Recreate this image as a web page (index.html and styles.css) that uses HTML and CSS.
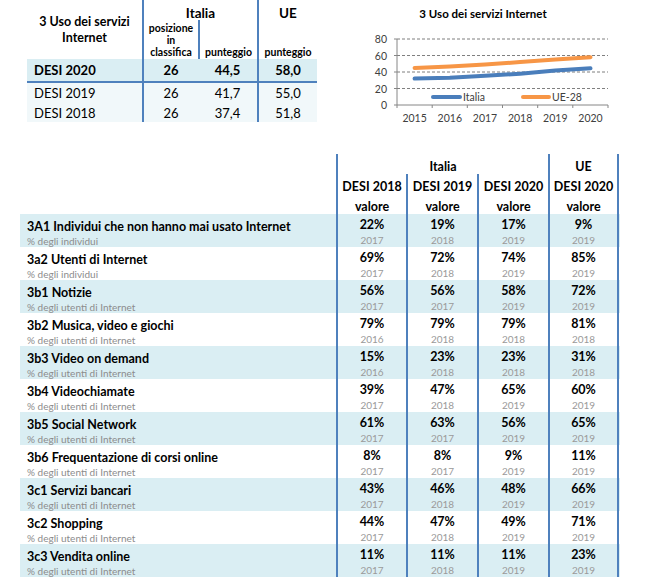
FILE: index.html
```html
<!DOCTYPE html>
<html lang="it">
<head>
<meta charset="utf-8">
<title>3 Uso dei servizi Internet</title>
<link rel="stylesheet" href="styles.css">
</head>
<body>
<div class="page">
  <section class="top">
    <div class="summary">
      <div class="s-title">3 Uso dei servizi<br>Internet</div>
      <div class="s-group bl">Italia</div>
      <div class="s-group s-ue bl">UE</div>
      <div class="s-sub bl">posizione<br>in<br>classifica</div>
      <div class="s-sub bl">punteggio</div>
      <div class="s-sub bl">punteggio</div>

      <div class="s-lab hl strong">DESI 2020</div>
      <div class="s-val hl strong bl">26</div>
      <div class="s-val hl strong">44,5</div>
      <div class="s-val hl strong bl">58,0</div>

      <div class="s-lab lt sep">DESI 2019</div>
      <div class="s-val lt sep bl">26</div>
      <div class="s-val lt sep">41,7</div>
      <div class="s-val lt sep bl">55,0</div>

      <div class="s-lab lt">DESI 2018</div>
      <div class="s-val lt bl">26</div>
      <div class="s-val lt">37,4</div>
      <div class="s-val lt bl">51,8</div>
    </div>

    <div class="chart">
      <svg class="chart-svg" width="310" height="130" viewBox="0 0 310 130">
        <text class="c-title" x="143" y="18" text-anchor="middle">3 Uso dei servizi Internet</text>
        <g class="grid">
          <line x1="57" y1="39" x2="268" y2="39"/>
          <line x1="57" y1="55.5" x2="268" y2="55.5"/>
          <line x1="57" y1="72" x2="268" y2="72"/>
          <line x1="57" y1="88.5" x2="268" y2="88.5"/>
        </g>
        <g class="axis">
          <line x1="57" y1="39" x2="57" y2="105"/>
          <line x1="54" y1="39" x2="57" y2="39"/>
          <line x1="54" y1="55.5" x2="57" y2="55.5"/>
          <line x1="54" y1="72" x2="57" y2="72"/>
          <line x1="54" y1="88.5" x2="57" y2="88.5"/>
          <line x1="54" y1="105" x2="268" y2="105"/>
          <line x1="57" y1="105" x2="57" y2="108"/>
          <line x1="92.2" y1="105" x2="92.2" y2="108"/>
          <line x1="127.3" y1="105" x2="127.3" y2="108"/>
          <line x1="162.5" y1="105" x2="162.5" y2="108"/>
          <line x1="197.7" y1="105" x2="197.7" y2="108"/>
          <line x1="232.8" y1="105" x2="232.8" y2="108"/>
          <line x1="268" y1="105" x2="268" y2="108"/>
        </g>
        <g class="ylab" text-anchor="end">
          <text x="47" y="43">80</text>
          <text x="47" y="59.5">60</text>
          <text x="47" y="76">40</text>
          <text x="47" y="92.5">20</text>
          <text x="47" y="109">0</text>
        </g>
        <g class="xlab" text-anchor="middle">
          <text x="74.6" y="122">2015</text>
          <text x="109.8" y="122">2016</text>
          <text x="145" y="122">2017</text>
          <text x="180.1" y="122">2018</text>
          <text x="215.3" y="122">2019</text>
          <text x="250.5" y="122">2020</text>
        </g>
        <polyline class="s-eu" points="74.6,67.9 109.8,66.6 145,64.6 180.1,62.1 215.3,59.6 250.5,57.2"/>
        <polyline class="s-it" points="74.6,78.6 109.8,77.8 145,75.7 180.1,73.7 215.3,70.4 250.5,68.3"/>
        <g class="legend">
          <line class="s-it" x1="93" y1="97" x2="120" y2="97"/>
          <text x="123" y="101">Italia</text>
          <line class="s-eu" x1="183" y1="97" x2="209" y2="97"/>
          <text x="212" y="101">UE-28</text>
        </g>
      </svg>
    </div>
  </section>

  <section class="detail">
    <div class="d-row d-head">
      <div></div>
      <div class="d-h d-span bl">Italia</div>
      <div class="d-h bl br">UE</div>
    </div>
    <div class="d-row d-head">
      <div></div>
      <div class="d-h bl">DESI 2018</div>
      <div class="d-h bl">DESI 2019</div>
      <div class="d-h bl">DESI 2020</div>
      <div class="d-h bl br">DESI 2020</div>
    </div>
    <div class="d-row d-head">
      <div></div>
      <div class="d-h bl">valore</div>
      <div class="d-h bl">valore</div>
      <div class="d-h bl">valore</div>
      <div class="d-h bl br">valore</div>
    </div>

    <div class="d-row d-data alt">
      <div class="d-lab"><div class="name">3A1 Individui che non hanno mai usato Internet</div><div class="unit">% degli individui</div></div>
      <div class="d-cell bl"><div class="v">22%</div><div class="y">2017</div></div>
      <div class="d-cell bl"><div class="v">19%</div><div class="y">2018</div></div>
      <div class="d-cell bl"><div class="v">17%</div><div class="y">2019</div></div>
      <div class="d-cell bl br"><div class="v">9%</div><div class="y">2019</div></div>
    </div>
    <div class="d-row d-data">
      <div class="d-lab"><div class="name">3a2 Utenti di Internet</div><div class="unit">% degli individui</div></div>
      <div class="d-cell bl"><div class="v">69%</div><div class="y">2017</div></div>
      <div class="d-cell bl"><div class="v">72%</div><div class="y">2018</div></div>
      <div class="d-cell bl"><div class="v">74%</div><div class="y">2019</div></div>
      <div class="d-cell bl br"><div class="v">85%</div><div class="y">2019</div></div>
    </div>
    <div class="d-row d-data alt">
      <div class="d-lab"><div class="name">3b1 Notizie</div><div class="unit">% degli utenti di Internet</div></div>
      <div class="d-cell bl"><div class="v">56%</div><div class="y">2017</div></div>
      <div class="d-cell bl"><div class="v">56%</div><div class="y">2017</div></div>
      <div class="d-cell bl"><div class="v">58%</div><div class="y">2019</div></div>
      <div class="d-cell bl br"><div class="v">72%</div><div class="y">2019</div></div>
    </div>
    <div class="d-row d-data">
      <div class="d-lab"><div class="name">3b2 Musica, video e giochi</div><div class="unit">% degli utenti di Internet</div></div>
      <div class="d-cell bl"><div class="v">79%</div><div class="y">2016</div></div>
      <div class="d-cell bl"><div class="v">79%</div><div class="y">2018</div></div>
      <div class="d-cell bl"><div class="v">79%</div><div class="y">2018</div></div>
      <div class="d-cell bl br"><div class="v">81%</div><div class="y">2018</div></div>
    </div>
    <div class="d-row d-data alt">
      <div class="d-lab"><div class="name">3b3 Video on demand</div><div class="unit">% degli utenti di Internet</div></div>
      <div class="d-cell bl"><div class="v">15%</div><div class="y">2016</div></div>
      <div class="d-cell bl"><div class="v">23%</div><div class="y">2018</div></div>
      <div class="d-cell bl"><div class="v">23%</div><div class="y">2018</div></div>
      <div class="d-cell bl br"><div class="v">31%</div><div class="y">2018</div></div>
    </div>
    <div class="d-row d-data">
      <div class="d-lab"><div class="name">3b4 Videochiamate</div><div class="unit">% degli utenti di Internet</div></div>
      <div class="d-cell bl"><div class="v">39%</div><div class="y">2017</div></div>
      <div class="d-cell bl"><div class="v">47%</div><div class="y">2018</div></div>
      <div class="d-cell bl"><div class="v">65%</div><div class="y">2019</div></div>
      <div class="d-cell bl br"><div class="v">60%</div><div class="y">2019</div></div>
    </div>
    <div class="d-row d-data alt">
      <div class="d-lab"><div class="name">3b5 Social Network</div><div class="unit">% degli utenti di Internet</div></div>
      <div class="d-cell bl"><div class="v">61%</div><div class="y">2017</div></div>
      <div class="d-cell bl"><div class="v">63%</div><div class="y">2017</div></div>
      <div class="d-cell bl"><div class="v">56%</div><div class="y">2019</div></div>
      <div class="d-cell bl br"><div class="v">65%</div><div class="y">2019</div></div>
    </div>
    <div class="d-row d-data">
      <div class="d-lab"><div class="name">3b6 Frequentazione di corsi online</div><div class="unit">% degli utenti di Internet</div></div>
      <div class="d-cell bl"><div class="v">8%</div><div class="y">2017</div></div>
      <div class="d-cell bl"><div class="v">8%</div><div class="y">2017</div></div>
      <div class="d-cell bl"><div class="v">9%</div><div class="y">2019</div></div>
      <div class="d-cell bl br"><div class="v">11%</div><div class="y">2019</div></div>
    </div>
    <div class="d-row d-data alt">
      <div class="d-lab"><div class="name">3c1 Servizi bancari</div><div class="unit">% degli utenti di Internet</div></div>
      <div class="d-cell bl"><div class="v">43%</div><div class="y">2017</div></div>
      <div class="d-cell bl"><div class="v">46%</div><div class="y">2018</div></div>
      <div class="d-cell bl"><div class="v">48%</div><div class="y">2019</div></div>
      <div class="d-cell bl br"><div class="v">66%</div><div class="y">2019</div></div>
    </div>
    <div class="d-row d-data">
      <div class="d-lab"><div class="name">3c2 Shopping</div><div class="unit">% degli utenti di Internet</div></div>
      <div class="d-cell bl"><div class="v">44%</div><div class="y">2017</div></div>
      <div class="d-cell bl"><div class="v">47%</div><div class="y">2018</div></div>
      <div class="d-cell bl"><div class="v">49%</div><div class="y">2019</div></div>
      <div class="d-cell bl br"><div class="v">71%</div><div class="y">2019</div></div>
    </div>
    <div class="d-row d-data alt">
      <div class="d-lab"><div class="name">3c3 Vendita online</div><div class="unit">% degli utenti di Internet</div></div>
      <div class="d-cell bl"><div class="v">11%</div><div class="y">2017</div></div>
      <div class="d-cell bl"><div class="v">11%</div><div class="y">2018</div></div>
      <div class="d-cell bl"><div class="v">11%</div><div class="y">2019</div></div>
      <div class="d-cell bl br"><div class="v">23%</div><div class="y">2019</div></div>
    </div>
  </section>
</div>
</body>
</html>
```

FILE: styles.css
```css
* { box-sizing: border-box; }

body {
  margin: 0;
  background: #ffffff;
  font-family: Lato, "Liberation Sans", sans-serif;
  color: #000000;
}

.page {
  width: 650px;
}

.bl { border-left: 2px solid #4f81bd; }
.br { border-right: 2px solid #4f81bd; }

/* ---------- top summary table ---------- */
.top {
  display: flex;
  height: 130px;
}

.summary {
  margin-left: 27px;
  width: 290px;
  display: grid;
  grid-template-columns: 115px 56px 59px 60px;
  grid-template-rows: 20px 39px 22px 22px 19px;
  align-self: flex-start;
}

.s-title {
  grid-row: 1 / 3;
  grid-column: 1;
  display: flex;
  align-items: center;
  justify-content: center;
  text-align: center;
  font-weight: 700;
  font-size: 12.5px;
  line-height: 16px;
}

.s-group {
  grid-column: 2 / 4;
  text-align: center;
  font-weight: 700;
  font-size: 13.5px;
  line-height: 14px;
  padding-top: 6px;
}

.s-group.s-ue { grid-column: 4; }

.s-sub {
  display: flex;
  align-items: flex-end;
  justify-content: center;
  text-align: center;
  font-weight: 700;
  font-size: 10.5px;
  line-height: 12px;
  padding-bottom: 1px;
  white-space: nowrap;
}

.s-lab {
  padding-left: 7px;
  font-size: 13px;
  line-height: 20px;
}

.s-val {
  text-align: center;
  font-size: 13px;
  line-height: 20px;
}

.s-lab.hl, .s-val.hl { line-height: 22px; }

.hl { background: #daeef3; }
.lt { background: #f1f8fa; }
.strong { font-weight: 700; }
.sep { border-top: 2px solid #4f81bd; }

/* ---------- chart ---------- */
.chart {
  margin-left: 23px;
  width: 310px;
}

.chart-svg { display: block; }

.c-title {
  font-family: Lato, "Liberation Sans", sans-serif;
  font-weight: 700;
  font-size: 11.5px;
  fill: #000;
}

.grid line {
  stroke: #7f7f7f;
  stroke-width: 1;
  stroke-dasharray: 3 2;
}

.axis line {
  stroke: #868686;
  stroke-width: 1;
}

.ylab text, .xlab text, .legend text {
  font-family: Lato, "Liberation Sans", sans-serif;
  font-size: 10.5px;
  fill: #404040;
}

polyline, .legend line {
  fill: none;
  stroke-width: 4;
  stroke-linecap: round;
  stroke-linejoin: round;
}

.s-it { stroke: #4a7ebb; }
.s-eu { stroke: #f79646; }

/* ---------- detail table ---------- */
.detail {
  margin-left: 20px;
  margin-top: 24px;
  width: 600px;
}

.d-row {
  display: grid;
  grid-template-columns: 316px 70px 71px 71px 71px;
}

.d-head {
  height: 20px;
}

.d-h {
  text-align: center;
  font-weight: 700;
  font-size: 12.5px;
  line-height: 26px;
  height: 20px;
}

.d-span { grid-column: 2 / 5; }

.d-data {
  height: 33px;
}

.d-data.alt { background: #daeef3; }

.d-lab {
  padding: 4px 0 0 7px;
}

.name {
  font-weight: 700;
  font-size: 12.5px;
  line-height: 18px;
  white-space: nowrap;
}

.unit {
  font-size: 10px;
  line-height: 11px;
  color: #8c8c8c;
}

.d-cell {
  text-align: center;
  padding-top: 2px;
}

.v {
  font-weight: 700;
  font-size: 12.5px;
  line-height: 18px;
}

.y {
  font-size: 10px;
  line-height: 13px;
  color: #9a9a9a;
}
```
